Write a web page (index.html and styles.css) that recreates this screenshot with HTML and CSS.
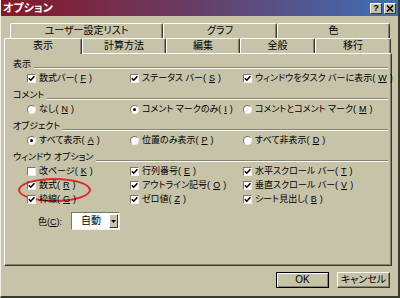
FILE: index.html
```html
<!DOCTYPE html>
<html lang="ja">

<head>
    <meta charset="UTF-8">
    <title>オプション</title>
    <link rel="stylesheet" href="styles.css">
</head>

<body>
    <div class="window">
        <div class="titlebar">
            <span class="title">オプション</span>
            <div class="title-btns">
                <span class="tbtn">?</span>
                <span class="tbtn close">
                    <svg width="8" height="7" viewBox="0 0 8 7"><path d="M1 0.5 L7 6.5 M7 0.5 L1 6.5" stroke="#000" stroke-width="1.6"/></svg>
                </span>
            </div>
        </div>
        <div class="content">
            <div class="tabrow back">
                <span class="tab w1">ユーザー設定リスト</span>
                <span class="tab w2">グラフ</span>
                <span class="tab w3">色</span>
            </div>
            <div class="tabrow front">
                <span class="tab active t1">表示</span>
                <span class="tab t2">計算方法</span>
                <span class="tab t3">編集</span>
                <span class="tab t4">全般</span>
                <span class="tab t5">移行</span>
            </div>
            <div class="panel">
                <div class="group-label first"><span>表示</span><i></i></div>
                <div class="opts">
                    <label class="opt"><span class="check on"></span>数式バー(<u>F</u>)</label>
                    <label class="opt"><span class="check on"></span>ステータス バー(<u>S</u>)</label>
                    <label class="opt"><span class="check on"></span>ウィンドウをタスク バーに表示(<u>W</u>)</label>
                </div>

                <div class="group-label"><span>コメント</span><i></i></div>
                <div class="opts">
                    <label class="opt"><span class="radio"></span>なし(<u>N</u>)</label>
                    <label class="opt"><span class="radio on"></span>コメント マークのみ(<u>I</u>)</label>
                    <label class="opt"><span class="radio"></span>コメントとコメント マーク(<u>M</u>)</label>
                </div>

                <div class="group-label"><span>オブジェクト</span><i></i></div>
                <div class="opts">
                    <label class="opt"><span class="radio on"></span>すべて表示(<u>A</u>)</label>
                    <label class="opt"><span class="radio"></span>位置のみ表示(<u>P</u>)</label>
                    <label class="opt"><span class="radio"></span>すべて非表示(<u>D</u>)</label>
                </div>

                <div class="group-label"><span>ウィンドウ オプション</span><i></i></div>
                <div class="opts">
                    <label class="opt"><span class="check"></span>改ページ(<u>K</u>)</label>
                    <label class="opt"><span class="check on"></span>行列番号(<u>E</u>)</label>
                    <label class="opt"><span class="check on"></span>水平スクロール バー(<u>T</u>)</label>
                    <label class="opt marked"><span class="check on"></span>数式(<u>R</u>)</label>
                    <label class="opt"><span class="check on"></span>アウトライン記号(<u>O</u>)</label>
                    <label class="opt"><span class="check on"></span>垂直スクロール バー(<u>V</u>)</label>
                    <label class="opt"><span class="check on"></span>枠線(<u>G</u>)</label>
                    <label class="opt"><span class="check on"></span>ゼロ値(<u>Z</u>)</label>
                    <label class="opt"><span class="check on"></span>シート見出し(<u>B</u>)</label>
                </div>

                <div class="color-row">
                    <span>色(<u>C</u>):</span>
                    <div class="select">
                        <span class="select-value">自動</span>
                        <span class="select-btn"></span>
                    </div>
                </div>
            </div>
            <div class="actions">
                <span class="btn default">OK</span>
                <span class="btn">キャンセル</span>
            </div>
        </div>
    </div>
</body>

</html>
```

FILE: styles.css
```css
* {
    margin: 0;
    padding: 0;
    box-sizing: border-box;
}

body {
    width: 400px;
    height: 298px;
    overflow: hidden;
    background: #c6c3a9;
    color: #000;
    font-family: "Liberation Sans", "Noto Sans CJK JP", sans-serif;
    font-size: 9px;
    font-feature-settings: "palt";
    text-autospace: no-autospace;
}

u {
    text-decoration: underline;
}

.window {
    width: 400px;
    height: 298px;
    border-left: 1px solid #f2f0e4;
    border-right: 2px solid #3a392e;
    border-bottom: 2px solid #3a392e;
    display: flex;
    flex-direction: column;
}

/* タイトルバー */
.titlebar {
    height: 16px;
    padding: 0 2px 0 2px;
    background: linear-gradient(to right, #861828 0%, #6a3a60 45%, #3f6eb8 100%);
    display: flex;
    align-items: center;
    justify-content: space-between;
}

.title {
    color: #fff;
    font-weight: bold;
    font-size: 11px;
    line-height: 16px;
}

.title-btns {
    display: flex;
    gap: 2px;
}

.tbtn {
    width: 12px;
    height: 11px;
    background: #c6c3a9;
    border-top: 1px solid #fff;
    border-left: 1px solid #fff;
    border-right: 1px solid #3a392e;
    border-bottom: 1px solid #3a392e;
    font-weight: bold;
    font-size: 9px;
    line-height: 9px;
    text-align: center;
    display: flex;
    align-items: center;
    justify-content: center;
}

.content {
    flex: 1;
    padding: 7px 6px 0 3px;
    display: flex;
    flex-direction: column;
}

/* タブ */
.tabrow {
    display: flex;
    height: 15px;
    font-size: 10px;
}

.tabrow.back {
    margin-left: 6px;
}

.tab {
    height: 15px;
    line-height: 14px;
    text-align: center;
    border-top: 1px solid #fff;
    border-left: 1px solid #fff;
    border-right: 1px solid #3a392e;
    border-radius: 2px 2px 0 0;
    box-shadow: inset -1px 0 0 #86836f;
}

.w1 { width: 153px; }
.w2 { width: 114px; }
.w3 { width: 113px; }

.t1 { width: 78px; }
.t2 { width: 84px; }
.t3 { width: 74px; }
.t4 { width: 75px; }
.t5 { width: 76px; }

.tab.active {
    position: relative;
    height: 16px;
    margin-bottom: -1px;
    background: #c6c3a9;
    z-index: 1;
}

.panel {
    height: 213px;
    border-top: 1px solid #fff;
    border-left: 1px solid #fff;
    border-right: 1px solid #3a392e;
    border-bottom: 1px solid #3a392e;
    box-shadow: inset -1px -1px 0 #86836f;
    padding: 4px 3px 0 8px;
}

.group-label {
    display: flex;
    align-items: flex-end;
    height: 12px;
    line-height: 12px;
    margin-top: 4px;
}

.group-label.first {
    margin-top: 0;
}

.group-label i {
    flex: 1;
    height: 2px;
    margin: 0 0 1px 3px;
    border-top: 1px solid #86836f;
    border-bottom: 1px solid #fff;
}

.opts {
    display: grid;
    grid-template-columns: 103px 113px 1fr;
    grid-auto-rows: 14px;
    padding-left: 14px;
    margin-top: 1px;
}

.opt {
    position: relative;
    display: flex;
    align-items: center;
    gap: 3px;
    white-space: nowrap;
    line-height: 14px;
}

.check {
    width: 9px;
    height: 9px;
    flex: none;
    background: #fff;
    border-top: 1px solid #7a776a;
    border-left: 1px solid #7a776a;
    border-right: 1px solid #f2f0e4;
    border-bottom: 1px solid #f2f0e4;
}

.check.on {
    background: #fff url("data:image/svg+xml,%3Csvg xmlns='http://www.w3.org/2000/svg' width='7' height='7'%3E%3Cpath d='M0.8 3.2 L2.8 5.2 L6.4 1.2' fill='none' stroke='%23000' stroke-width='1.6'/%3E%3C/svg%3E") no-repeat center;
}

.radio {
    width: 9px;
    height: 9px;
    flex: none;
    border-radius: 50%;
    background: #fff;
    border: 1px solid;
    border-color: #7a776a #f2f0e4 #f2f0e4 #7a776a;
    display: flex;
    align-items: center;
    justify-content: center;
}

.radio.on::after {
    content: "";
    width: 3px;
    height: 3px;
    border-radius: 50%;
    background: #000;
}

/* 赤い丸印 */
.opt.marked::before {
    content: "";
    position: absolute;
    left: -9px;
    top: 0;
    width: 69px;
    height: 20px;
    border: 2px solid #e0262a;
    border-radius: 50%;
}

.color-row {
    display: flex;
    align-items: center;
    gap: 9px;
    padding-left: 25px;
    margin-top: 6px;
    height: 18px;
}

.select {
    width: 49px;
    height: 18px;
    display: flex;
    background: #fff;
    border-top: 1px solid #7a776a;
    border-left: 1px solid #7a776a;
    border-right: 1px solid #f2f0e4;
    border-bottom: 1px solid #f2f0e4;
    padding: 1px;
}

.select-value {
    flex: 1;
    text-align: center;
    line-height: 14px;
    font-size: 10px;
}

.select-btn {
    width: 9px;
    background: #c6c3a9 url("data:image/svg+xml,%3Csvg xmlns='http://www.w3.org/2000/svg' width='5' height='3'%3E%3Cpath d='M0 0 H5 L2.5 3 Z' fill='%23000'/%3E%3C/svg%3E") no-repeat center;
    border-top: 1px solid #fff;
    border-left: 1px solid #fff;
    border-right: 1px solid #3a392e;
    border-bottom: 1px solid #3a392e;
}

/* ボタン */
.actions {
    display: flex;
    justify-content: flex-end;
    gap: 8px;
    padding: 6px 2px 0 0;
}

.btn {
    width: 53px;
    height: 16px;
    line-height: 13px;
    text-align: center;
    font-size: 10px;
    border-top: 1px solid #fff;
    border-left: 1px solid #fff;
    border-right: 1px solid #3a392e;
    border-bottom: 1px solid #3a392e;
    box-shadow: inset -1px -1px 0 #86836f;
}

.btn.default {
    border: 1px solid #000;
    box-shadow: inset 1px 1px 0 #fff, inset -1px -1px 0 #86836f;
}
```
